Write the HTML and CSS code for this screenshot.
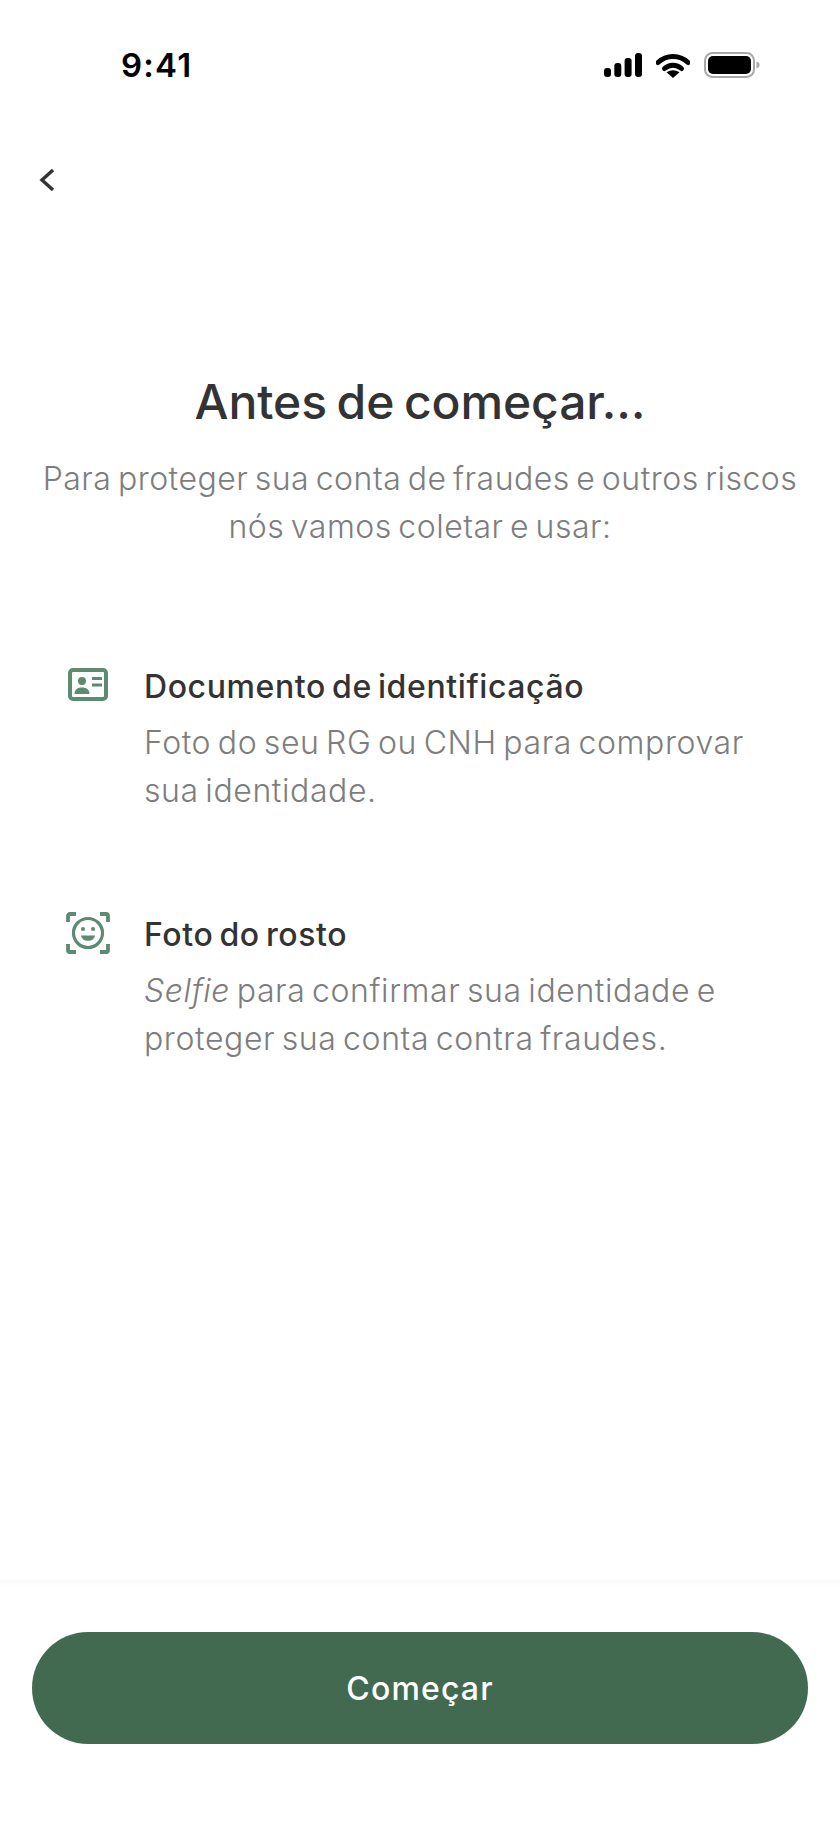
FILE: index.html
```html
<!DOCTYPE html>
<html lang="pt-BR">
<head>
<meta charset="utf-8">
<title>Antes de começar</title>
<link rel="stylesheet" href="styles.css">
</head>
<body>
<div class="screen">
  <header class="status">
    <span class="clock">9:41</span>
    <div class="status-icons">
      <svg class="sig" width="38" height="24" viewBox="0 0 38 24"><rect x="0" y="15" width="7" height="9" rx="3" fill="#000"/><rect x="10.300" y="10" width="7" height="14" rx="3" fill="#000"/><rect x="20.600" y="5" width="7" height="19" rx="3" fill="#000"/><rect x="31" y="0" width="7" height="24" rx="3" fill="#000"/></svg>
      <svg class="wifi" width="34" height="25" viewBox="0 0 34 25"><path d="M2 9.500C10.500 1.500 23.500 1.500 32 9.500" fill="none" stroke="#000" stroke-width="5" stroke-linecap="round"/><path d="M8.500 15.500C13.500 11 20.500 11 25.500 15.500" fill="none" stroke="#000" stroke-width="5" stroke-linecap="round"/><path d="M17 25L10.500 19.300C14.500 16.500 19.500 16.500 23.500 19.300Z" fill="#000"/></svg>
      <svg class="batt" width="56" height="26" viewBox="0 0 56 26"><rect x="1" y="1" width="49" height="24" rx="7.500" fill="none" stroke="#a8a8a8" stroke-width="2"/><rect x="4" y="4" width="43" height="18" rx="5" fill="#000"/><path d="M52.500 9.500C54.500 10 55.500 11.300 55.500 13C55.500 14.700 54.500 16 52.500 16.500Z" fill="#a8a8a8"/></svg>
    </div>
  </header>

  <nav class="nav">
    <svg width="16" height="24" viewBox="0 0 16 24"><path d="M14 2L3 12L14 22" fill="none" stroke="#333" stroke-width="3.400"/></svg>
  </nav>

  <main class="content">
    <h1 class="title">Antes de começar…</h1>
    <p class="lead">Para proteger sua conta de fraudes e outros riscos<br>nós vamos coletar e usar:</p>

    <ul class="items">
      <li class="item">
        <div class="item-icon">
          <svg width="40" height="33" viewBox="0 0 40 33"><rect x="2" y="2" width="36" height="29" rx="3" fill="none" stroke="#5c8a72" stroke-width="4"/><circle cx="14" cy="13" r="4" fill="#5c8a72"/><path d="M6.500 26C6.500 21 10 19.500 14 19.500C18 19.500 21.500 21 21.500 26Z" fill="#5c8a72"/><rect x="24" y="9" width="10" height="3" fill="#5c8a72"/><rect x="24" y="15.500" width="10" height="3" fill="#5c8a72"/></svg>
        </div>
        <div class="item-text">
          <h2 class="item-title">Documento de identificação</h2>
          <p class="item-desc">Foto do seu RG ou CNH para comprovar<br>sua identidade.</p>
        </div>
      </li>
      <li class="item item-face">
        <div class="item-icon">
          <svg width="46" height="44" viewBox="0 0 46 44"><g fill="none" stroke="#5c8a72" stroke-width="3.800"><path d="M3 11V5Q3 3 5 3H11"/><path d="M35 3H41Q43 3 43 5V11"/><path d="M3 33V39Q3 41 5 41H11"/><path d="M35 41H41Q43 41 43 39V33"/><circle cx="23" cy="22" r="14.500" stroke-width="3.200"/></g><circle cx="18" cy="18" r="2" fill="#5c8a72"/><circle cx="28" cy="18" r="2" fill="#5c8a72"/><path d="M16 24.500H30C29.500 27.800 26.800 29.800 23 29.800C19.200 29.800 16.500 27.800 16 24.500Z" fill="#5c8a72"/></svg>
        </div>
        <div class="item-text">
          <h2 class="item-title">Foto do rosto</h2>
          <p class="item-desc"><em>Selfie</em> para confirmar sua identidade e<br>proteger sua conta contra fraudes.</p>
        </div>
      </li>
    </ul>
  </main>

  <footer class="footer">
    <button class="cta">Começar</button>
  </footer>
</div>
</body>
</html>
```
FILE: styles.css
```css
* { box-sizing: border-box; }
html, body { margin: 0; padding: 0; background: #fff; }
body { font-family: Inter, "Open Sans", sans-serif; }
.screen { width: 840px; height: 1824px; display: flex; flex-direction: column; background: #fff; }

.status { height: 130px; flex: none; display: flex; justify-content: space-between; align-items: flex-start; padding: 46px 80px 0 121px; }
.clock { font-size: 33px; line-height: 38px; font-weight: 600; color: #000; letter-spacing: 1.2px; }
.status-icons { display: flex; align-items: center; gap: 14px; padding-top: 6px; }

.nav { height: 24px; flex: none; padding-left: 39px; margin-top: 38px; }
.nav svg { display: block; }

.content { flex: 1; padding: 0 32px; }
.title { margin: 181px 0 0; text-align: center; font-size: 48px; line-height: 58px; font-weight: 540; color: #333; letter-spacing: -0.1px; word-spacing: -3px; }
.lead { margin: 24px 0 0; text-align: center; font-size: 32px; line-height: 48px; font-weight: 300; color: #7d7d7d; letter-spacing: 0.5px; word-spacing: -3px; }

.items { list-style: none; margin: 0; padding: 0 0 0 36px; }
.item { display: flex; margin-top: 116px; }
.item-face { margin-top: 100px; }
.item-icon { width: 76px; flex: none; padding-top: 1px; }
.item-icon svg { display: block; }
.item-face .item-icon { margin: -4px 3px 0 -3px; padding-top: 0; }
.item-title { margin: 0; font-size: 32px; line-height: 40px; font-weight: 500; color: #333; letter-spacing: 0.6px; word-spacing: -3px; }
.item-desc { margin: 12px 0 0; font-size: 32px; line-height: 48px; font-weight: 300; color: #7d7d7d; letter-spacing: 0.6px; word-spacing: -3px; }

.footer { height: 244px; flex: none; padding: 52px 32px 0; background: linear-gradient(#fafafa, #fff 6px); }
.cta { display: block; width: 776px; height: 112px; border: 0; border-radius: 56px; background: #426a51; color: #fff; font-family: inherit; font-size: 32px; font-weight: 450; letter-spacing: 1.15px; }
```
